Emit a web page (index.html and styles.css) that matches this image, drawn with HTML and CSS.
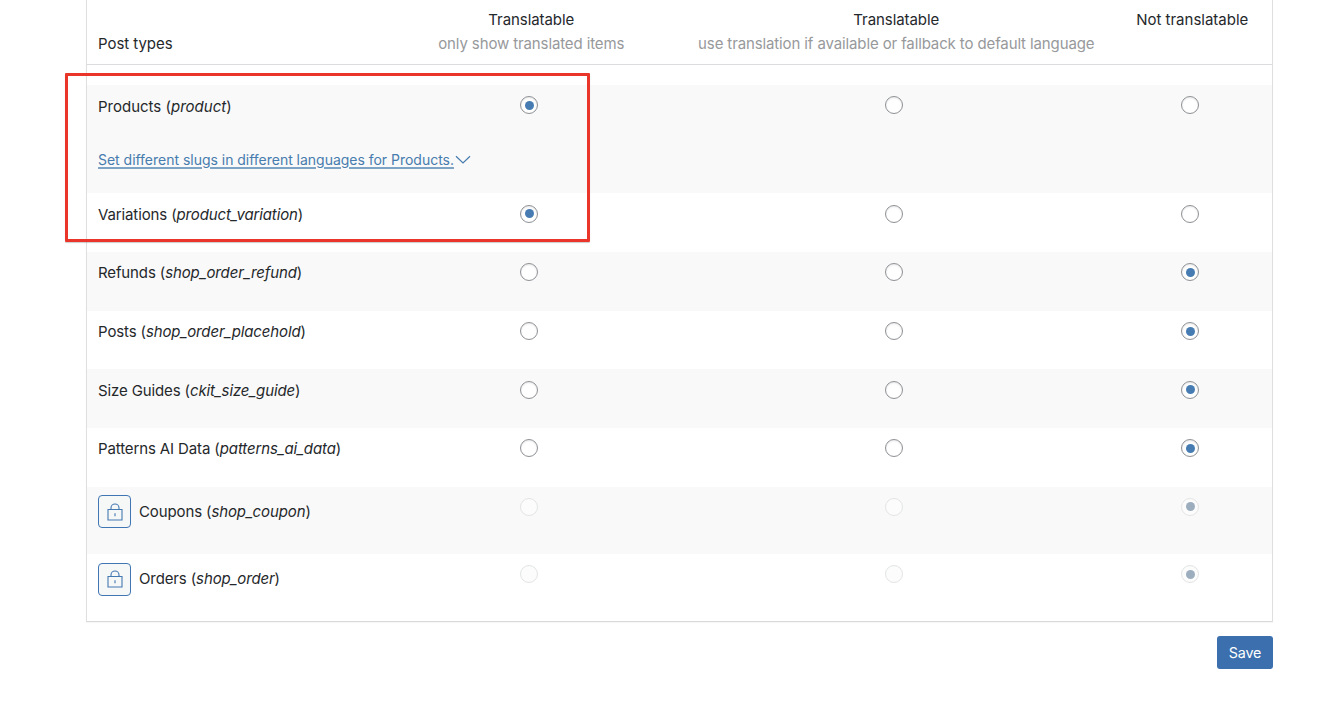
FILE: index.html
```html
<!DOCTYPE html>
<html lang="en">
<head>
<meta charset="utf-8">
<title>Post types translation</title>
<link rel="stylesheet" href="styles.css">
</head>
<body>
<main class="page">
  <section class="panel">
    <header class="row head">
      <div class="name">Post types</div>
      <div class="col"><span class="t1">Translatable</span><small class="s1">only show translated items</small></div>
      <div class="col"><span class="t1">Translatable</span><small class="s2">use translation if available or fallback to default language</small></div>
      <div class="col"><span class="t2">Not translatable</span></div>
    </header>
    <div class="row products">
      <div class="name"><span class="w1">Products (<em>product</em>)</span>
        <a class="slugs" href="#"><span class="slug-text">Set different slugs in different languages for Products.</span><svg class="chevron" viewBox="0 0 16 10"><path d="M1 1.2 8 8 15 1.2"/></svg></a>
      </div>
      <i class="radio on"></i><i class="radio"></i><i class="radio"></i>
    </div>
    <div class="row"><div class="name"><span>Variations (<em>product_variation</em>)</span></div><i class="radio on"></i><i class="radio"></i><i class="radio"></i></div>
    <div class="row alt"><div class="name"><span>Refunds (<em>shop_order_refund</em>)</span></div><i class="radio"></i><i class="radio"></i><i class="radio on"></i></div>
    <div class="row"><div class="name"><span>Posts (<em>shop_order_placehold</em>)</span></div><i class="radio"></i><i class="radio"></i><i class="radio on"></i></div>
    <div class="row alt"><div class="name"><span>Size Guides (<em>ckit_size_guide</em>)</span></div><i class="radio"></i><i class="radio"></i><i class="radio on"></i></div>
    <div class="row"><div class="name"><span>Patterns AI Data (<em>patterns_ai_data</em>)</span></div><i class="radio"></i><i class="radio"></i><i class="radio on"></i></div>
    <div class="row alt locked">
      <div class="name"><button class="lock"><svg viewBox="0 0 16 18"><path d="M1 6.5h14v10.5H1zM4 6.5V5a4 4 0 0 1 8 0v1.5M8 10.3v3"/></svg></button><span>Coupons (<em>shop_coupon</em>)</span></div>
      <i class="radio off"></i><i class="radio off"></i><i class="radio on off"></i>
    </div>
    <div class="row locked">
      <div class="name"><button class="lock"><svg viewBox="0 0 16 18"><path d="M1 6.5h14v10.5H1zM4 6.5V5a4 4 0 0 1 8 0v1.5M8 10.3v3"/></svg></button><span>Orders (<em>shop_order</em>)</span></div>
      <i class="radio off"></i><i class="radio off"></i><i class="radio on off"></i>
    </div>
  </section>
  <button class="save">Save</button>
  <div class="highlight"></div>
</main>
</body>
</html>
```
FILE: styles.css
```css
* { box-sizing: border-box; }
body { margin: 0; background: #fff; color: #25282b; font: 15px/24px Inter, "Liberation Sans", sans-serif; letter-spacing: -.12px; }
.page { position: relative; height: 704px; padding: 0 47px 0 86px; overflow: hidden; display: flex; flex-direction: column; }
.panel { border: 1px solid #dfdfe0; border-top: 0; border-bottom-color: #d8d9da; box-shadow: 0 1px 1px #00000008; height: 622px; flex: none; }
.row { display: grid; grid-template-columns: 297px 268px 462px 130px; justify-items: center; align-items: start; height: 58.65px; padding: 11.4px 0 0 11px; white-space: nowrap; }
.name { justify-self: start; line-height: 20px; margin-top: 0; }
.head { height: 65px; padding-top: 8px; border-bottom: 1px solid #dcdcde; margin-bottom: 20px; }
.head .name { margin-top: 26px; letter-spacing: -.05px; }
.col { display: flex; flex-direction: column; align-items: center; padding-left: 4.5px; }
.col small { font-size: 15px; color: #97999b; }
.t1 { letter-spacing: -.07px; }
.t2, .w1 { letter-spacing: 0; }
.alt, .products { background: #f9f9f9; }
.products { height: 108.4px; }
.products .name { margin-top: .6px; }
.slugs { display: flex; align-items: flex-start; margin-top: 33px; color: #477cae; font-size: 14px; letter-spacing: -.02px; text-decoration: none; }
.slug-text { text-decoration: underline; text-decoration-thickness: 1.5px; text-underline-offset: 1.5px; text-decoration-color: #7ea4c5; }
.chevron { width: 16px; height: 10px; margin: 5px 0 0 1px; fill: none; stroke: #477cae; stroke-width: 1.2; }
.radio { display: grid; place-items: center; width: 18px; height: 18px; border: 1px solid #8f9195; border-radius: 50%; background: #fff; box-shadow: inset 0 1px 2px #0000001a; }
.radio.on::before { content: ""; width: 9px; height: 9px; border-radius: 50%; background: #477cb3; }
.radio.off { border-color: #e3e4e5; background: #fcfcfc; box-shadow: none; }
.radio.on.off::before { background: #9caebe; }
.locked { height: 67.3px; }
.locked .name { display: flex; align-items: center; gap: 8px; margin-top: -2.6px; }
.lock { display: grid; place-items: center; width: 33px; height: 33px; padding: 0; border: 1px solid #3f76b3; border-radius: 4px; background: #f6f7f7; }
.lock svg { width: 16px; height: 18px; fill: none; stroke: #4479b1; stroke-width: 1.1; }
.save { align-self: flex-end; flex: none; width: 56px; height: 33px; margin-top: 14px; padding: 0; border: 0; border-radius: 3px; background: #3b6fae; color: #fff; font: 14.3px/33px Inter, "Liberation Sans", sans-serif; letter-spacing: -.2px; }
.highlight { position: absolute; left: 65px; top: 73px; width: 525px; height: 169px; border: 3px solid #e9352a; border-radius: 1px; box-shadow: 0 1px 1px #00000033; }
```
